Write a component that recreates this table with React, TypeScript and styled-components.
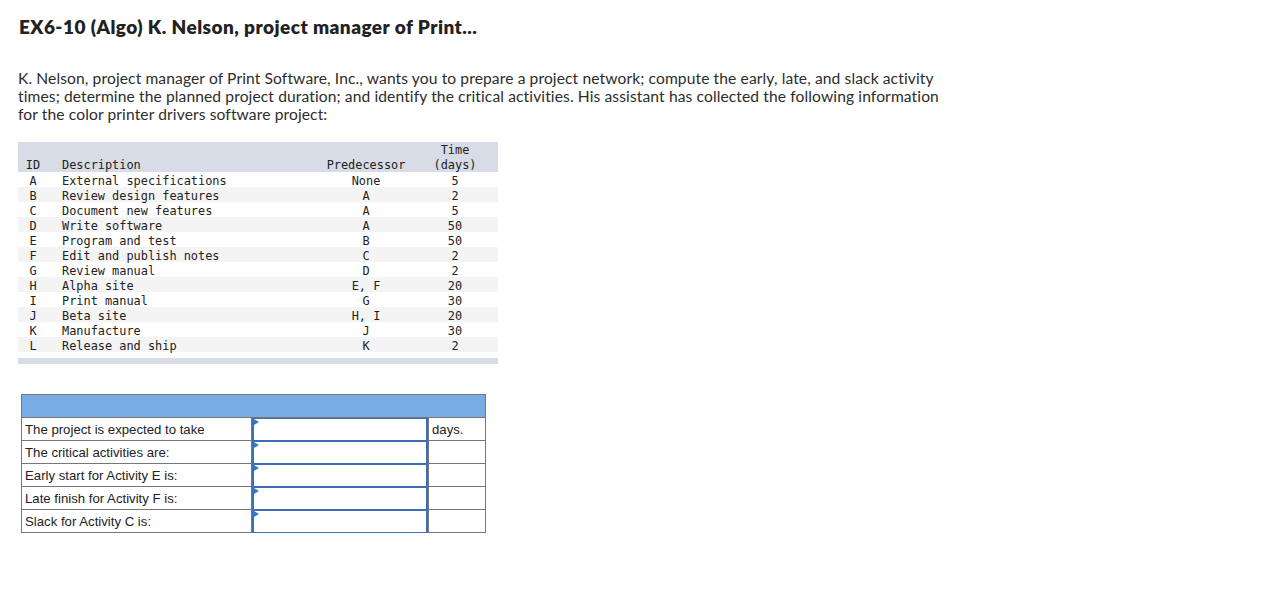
import React from "react";
import styled, { createGlobalStyle } from "styled-components";

const Global = createGlobalStyle`
  html, body { margin: 0; padding: 0; background: #fff; }
  body { font-family: "Open Sans", "Liberation Sans", sans-serif; color: #222; }
`;

const Page = styled.div`
  padding: 15px 18px 0 18px;
  display: flex;
  flex-direction: column;
`;

const Title = styled.h1`
  margin: 0 0 0 1px;
  font-family: "Lato", "Open Sans", sans-serif;
  font-weight: 800;
  font-size: 19px;
  line-height: 24px;
  color: #222;
  letter-spacing: 0.45px;
`;

const Para = styled.p`
  margin: 30px 0 0 0;
  font-family: "Lato", "Open Sans", sans-serif;
  font-size: 15.6px;
  line-height: 18px;
  color: #2d2d2d;
  letter-spacing: 0.11px;
  white-space: nowrap;
`;

const DataTable = styled.div`
  margin-top: 19px;
  width: 480px;
  font-family: "DejaVu Sans Mono", "Liberation Mono", monospace;
  font-size: 11.9px;
  color: #222;
  display: flex;
  flex-direction: column;
`;

const cols = "30px 14px 256px 96px 82px";

const HeadRow = styled.div`
  display: grid;
  grid-template-columns: ${cols};
  background: #d8dce6;
  height: 30px;
  box-sizing: border-box;
  align-items: end;
  line-height: 15px;
`;

const Row = styled.div<{ $alt: boolean }>`
  display: grid;
  grid-template-columns: ${cols};
  background: ${(p) => (p.$alt ? "#f4f4f4" : "#ffffff")};
  height: 15px;
  box-sizing: border-box;
  padding-top: 1px;
  line-height: 15px;
  align-items: center;
`;

const Cell = styled.div<{ $align?: string }>`
  text-align: ${(p) => p.$align || "left"};
  white-space: pre;
  position: relative;
  top: 1px;
`;

const Spacer = styled.div``;

const FootBar = styled.div`
  margin-top: 6px;
  height: 6px;
  background: #d8dce6;
`;

const AnswerTable = styled.div`
  margin-top: 30px;
  margin-left: 3px;
  width: 465px;
  box-sizing: border-box;
  border: 1px solid #777;
  font-family: "Liberation Sans", Arial, sans-serif;
  font-size: 13.2px;
  color: #222;
  display: flex;
  flex-direction: column;
`;

const AnswerHead = styled.div`
  height: 22px;
  background: #78ade4;
  border-bottom: 1px solid #777;
`;

const AnswerRow = styled.div<{ $last?: boolean }>`
  display: grid;
  grid-template-columns: 230px 176px 1fr;
  height: 22px;
  border-bottom: ${(p) => (p.$last ? "none" : "1px solid #777")};
`;

const Label = styled.div`
  padding-left: 3px;
  line-height: 24px;
  border-right: 1px solid #777;
  white-space: nowrap;
`;

const InputCell = styled.div`
  position: relative;
  border: 2px solid #3b70b4;
  border-top-width: 1px;
  background: #fff;
`;

const Flag = styled.span`
  position: absolute;
  left: 0;
  top: 0;
  width: 0;
  height: 0;
  border-top: 3px solid transparent;
  border-bottom: 3px solid transparent;
  border-left: 5px solid #3b78c4;
`;

const Unit = styled.div`
  border-left: 1px solid #777;
  padding-left: 3px;
  line-height: 24px;
`;

const rows: [string, string, string, string][] = [
  ["A", "External specifications", "None", "5"],
  ["B", "Review design features", "A", "2"],
  ["C", "Document new features", "A", "5"],
  ["D", "Write software", "A", "50"],
  ["E", "Program and test", "B", "50"],
  ["F", "Edit and publish notes", "C", "2"],
  ["G", "Review manual", "D", "2"],
  ["H", "Alpha site", "E, F", "20"],
  ["I", "Print manual", "G", "30"],
  ["J", "Beta site", "H, I", "20"],
  ["K", "Manufacture", "J", "30"],
  ["L", "Release and ship", "K", "2"],
];

const answers: [string, string][] = [
  ["The project is expected to take", "days."],
  ["The critical activities are:", ""],
  ["Early start for Activity E is:", ""],
  ["Late finish for Activity F is:", ""],
  ["Slack for Activity C is:", ""],
];

export default function App() {
  return (
    <>
      <Global />
      <Page>
        <Title>EX6-10 (Algo) K. Nelson, project manager of Print...</Title>
        <Para>
          K. Nelson, project manager of Print Software, Inc., wants you to prepare a project network; compute the early, late, and slack activity
          <br />
          times; determine the planned project duration; and identify the critical activities. His assistant has collected the following information
          <br />
          for the color printer drivers software project:
        </Para>
        <DataTable>
          <HeadRow>
            <Cell $align="center">ID</Cell>
            <Spacer />
            <Cell>Description</Cell>
            <Cell $align="center">Predecessor</Cell>
            <Cell $align="center">{"Time\n(days)"}</Cell>
          </HeadRow>
          {rows.map((r, i) => (
            <Row key={r[0]} $alt={i % 2 === 1}>
              <Cell $align="center">{r[0]}</Cell>
              <Spacer />
              <Cell>{r[1]}</Cell>
              <Cell $align="center">{r[2]}</Cell>
              <Cell $align="center">{r[3]}</Cell>
            </Row>
          ))}
          <FootBar />
        </DataTable>
        <AnswerTable>
          <AnswerHead />
          {answers.map((a, i) => (
            <AnswerRow key={a[0]} $last={i === answers.length - 1}>
              <Label>{a[0]}</Label>
              <InputCell>
                <Flag />
              </InputCell>
              <Unit>{a[1]}</Unit>
            </AnswerRow>
          ))}
        </AnswerTable>
      </Page>
    </>
  );
}
